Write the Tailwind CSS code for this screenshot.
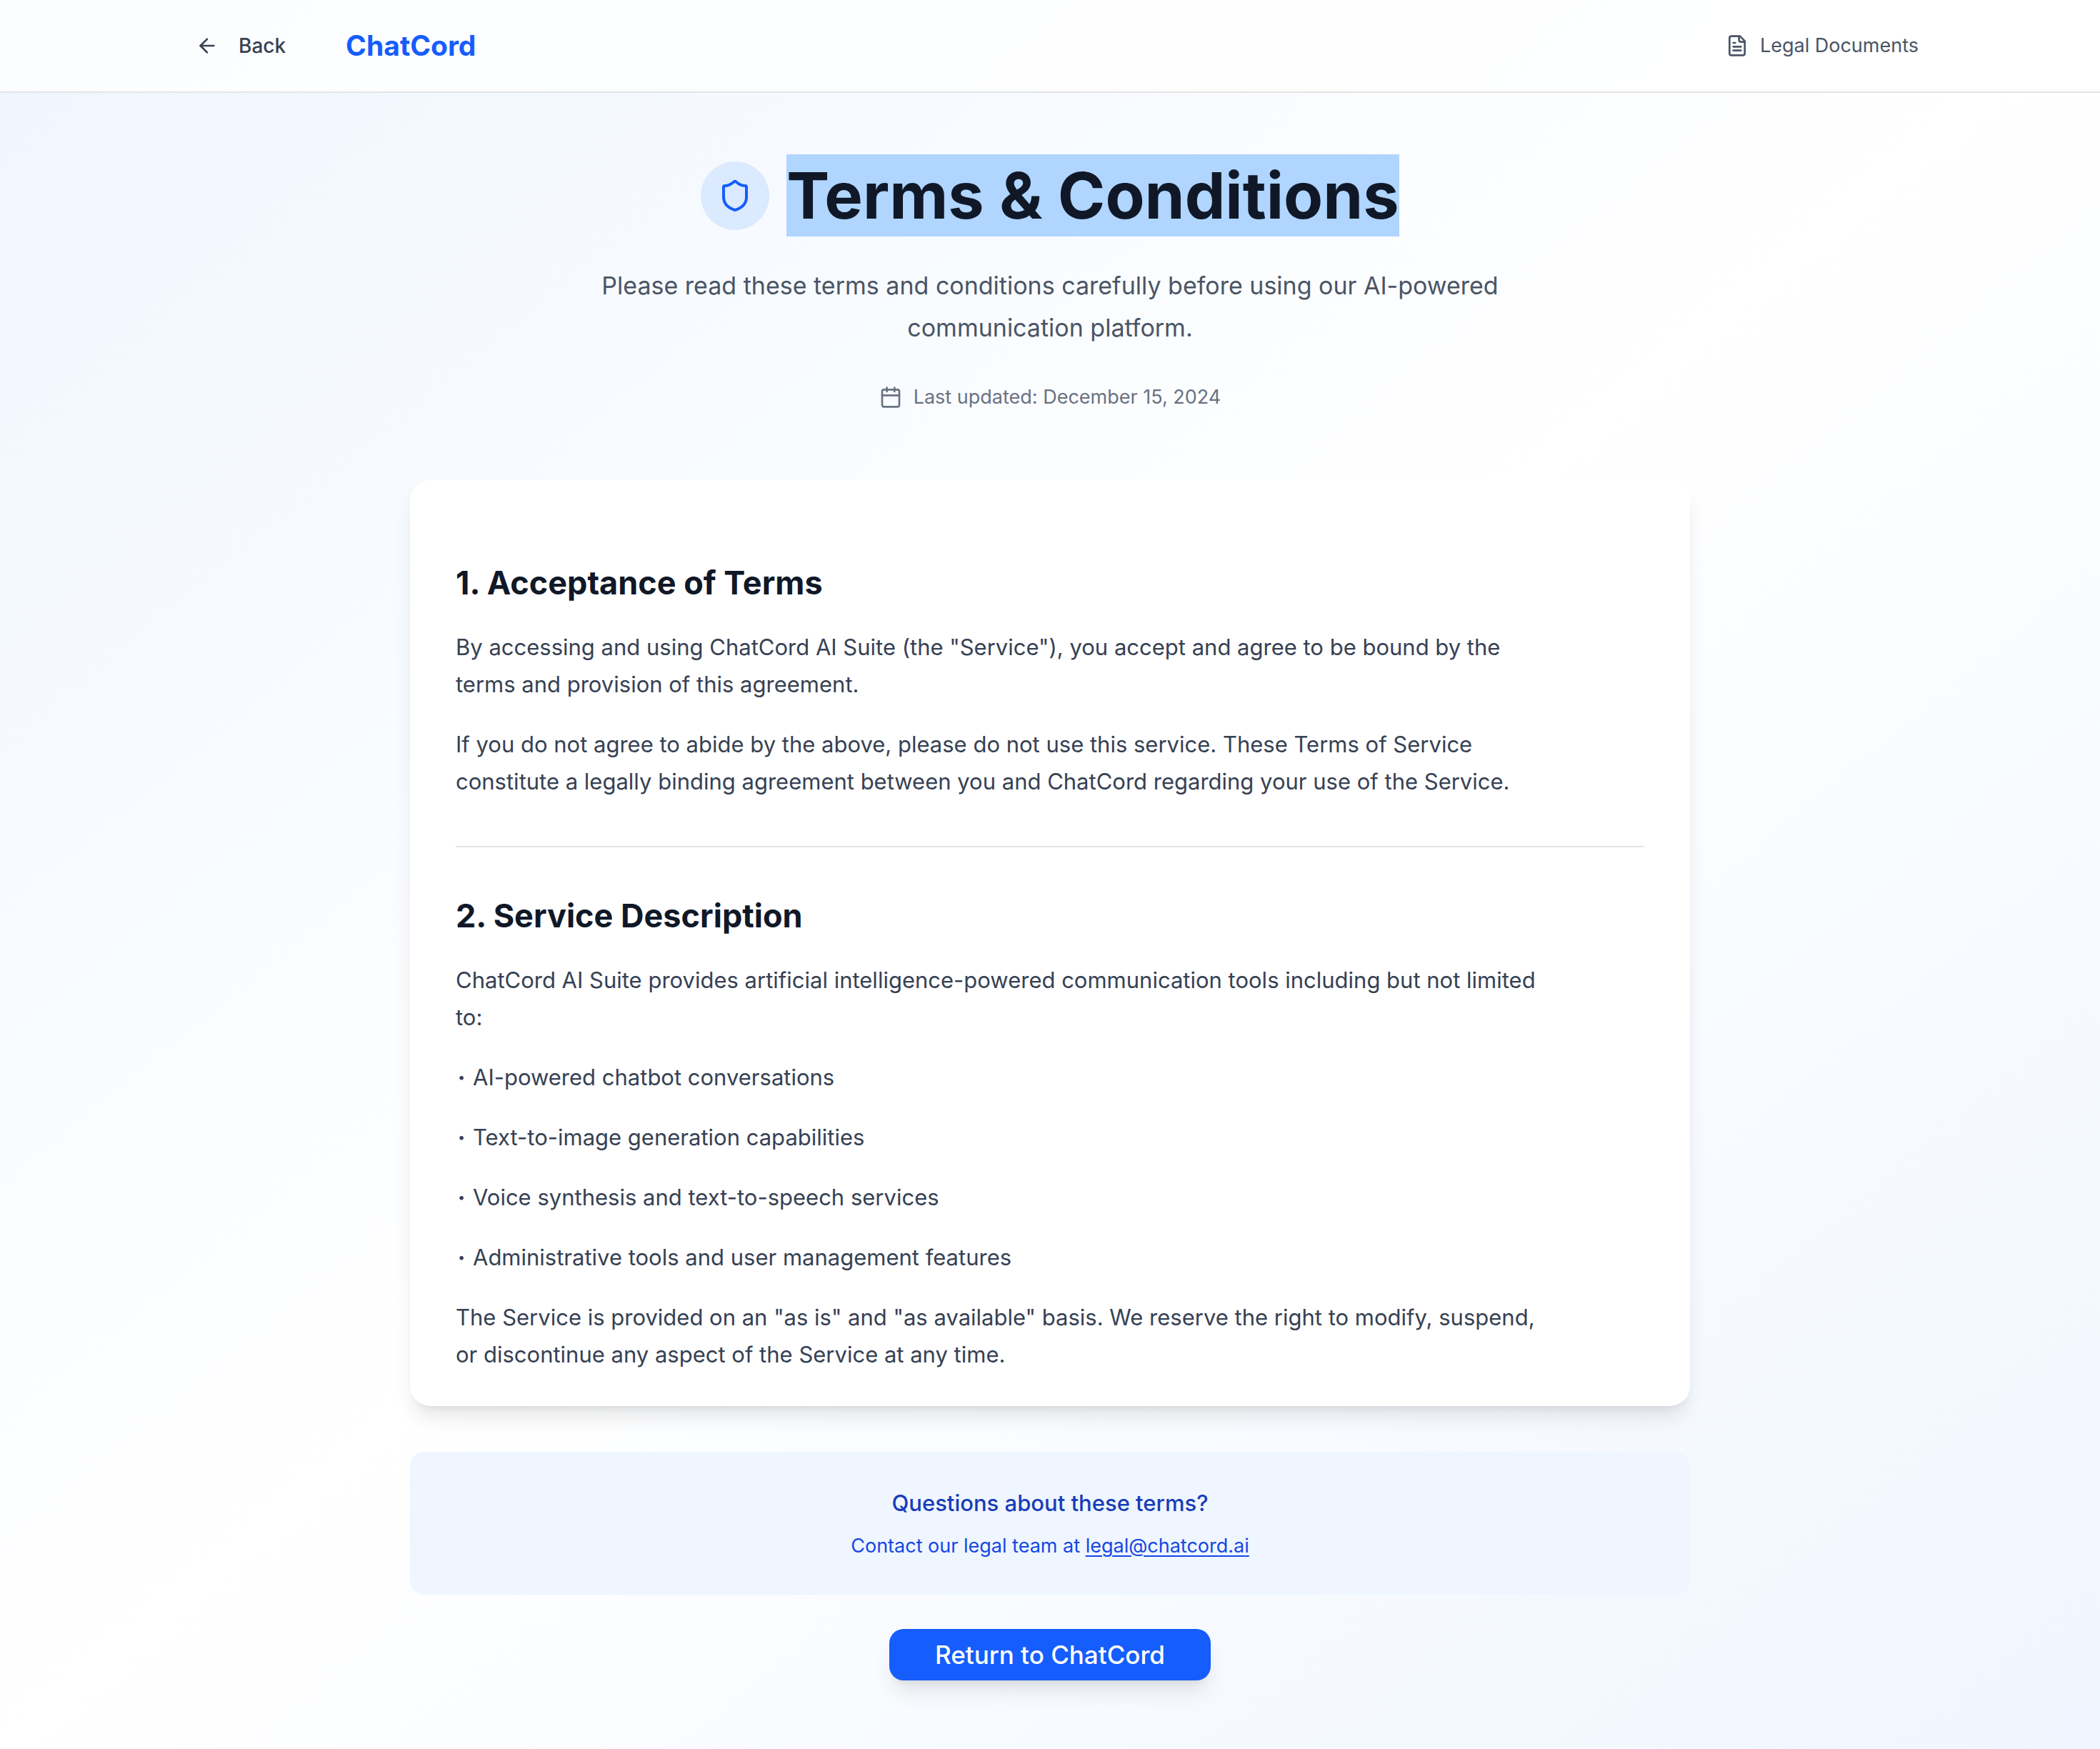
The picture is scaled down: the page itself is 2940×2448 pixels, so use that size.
<!DOCTYPE html>
<html lang="en">
<head>
<meta charset="utf-8">
<meta name="viewport" content="width=device-width, initial-scale=1">
<title>Terms &amp; Conditions - ChatCord</title>
<script src="https://cdn.jsdelivr.net/npm/@tailwindcss/browser@4"></script>
</head>
<body class="min-h-screen bg-linear-to-br from-[#eff6ff] via-white to-[#eff6ff] font-['Inter','Liberation_Sans',sans-serif] antialiased">
  <header class="border-b-2 border-[#e5e5e5] bg-white/80">
    <div class="mx-auto flex h-32 max-w-[2560px] items-center justify-between px-16">
      <div class="flex items-center gap-16">
        <button type="button" class="flex h-16 items-center gap-7 rounded-xl px-5 text-[28px] leading-10 font-medium text-[#364153]">
          <svg class="size-8" viewBox="0 0 24 24" fill="none" stroke="currentColor" stroke-width="2" stroke-linecap="round" stroke-linejoin="round" aria-hidden="true"><path d="m12 19-7-7 7-7"/><path d="M19 12H5"/></svg>
          Back
        </button>
        <a href="#" class="text-[39px] leading-14 font-bold text-[#155dfc]">ChatCord</a>
      </div>
      <a href="#" class="flex items-center gap-4 text-[27px] leading-10 text-[#4a5565]">
        <svg class="size-8" viewBox="0 0 24 24" fill="none" stroke="currentColor" stroke-width="2" stroke-linecap="round" stroke-linejoin="round" aria-hidden="true"><path d="M15 2H6a2 2 0 0 0-2 2v16a2 2 0 0 0 2 2h12a2 2 0 0 0 2-2V7Z"/><path d="M14 2v4a2 2 0 0 0 2 2h4"/><path d="M10 9H8"/><path d="M16 13H8"/><path d="M16 17H8"/></svg>
        Legal Documents
      </a>
    </div>
  </header>

  <main class="mx-auto max-w-[1920px] px-16 py-24">
    <div class="mb-24 flex flex-col items-center text-center">
      <div class="mb-12 flex items-center gap-6">
        <div class="rounded-full bg-[#dbeafe] p-6">
          <svg class="size-12 text-[#155dfc]" viewBox="0 0 24 24" fill="none" stroke="currentColor" stroke-width="2" stroke-linecap="round" stroke-linejoin="round" aria-hidden="true"><path d="M20 13c0 5-3.500 7.500-7.660 8.950a1 1 0 0 1-.67-.01C7.500 20.500 4 18 4 13V6a1 1 0 0 1 1-1c2 0 4.500-1.200 6.240-2.720a1.170 1.170 0 0 1 1.520 0C14.510 3.810 17 5 19 5a1 1 0 0 1 1 1z"/></svg>
        </div>
        <h1 class="text-[90px] leading-24 font-bold text-[#101828]"><span class="bg-[#b0d5ff] py-[3px]">Terms &amp; Conditions</span></h1>
      </div>
      <p class="mb-12 max-w-[1344px] text-[34px] leading-[59px] text-[#4a5565]">Please read these terms and conditions carefully before using our AI-powered communication platform.</p>
      <div class="flex items-center gap-4 text-[27px] leading-10 text-[#6a7282]">
        <svg class="size-8" viewBox="0 0 24 24" fill="none" stroke="currentColor" stroke-width="2" stroke-linecap="round" stroke-linejoin="round" aria-hidden="true"><path d="M8 2v4"/><path d="M16 2v4"/><rect width="18" height="18" x="3" y="4" rx="2"/><path d="M3 10h18"/></svg>
        <span>Last updated: December 15, 2024</span>
      </div>
    </div>

    <article class="rounded-[28px] bg-white px-16 pt-28 pb-[46px] shadow-[0_20px_30px_-6px_rgb(0_0_0/0.1),0_8px_12px_-8px_rgb(0_0_0/0.1)]">
      <section class="border-b-2 border-[#e5e5e5] pb-16">
        <h2 class="mb-8 text-[45px] leading-16 font-bold text-[#101828]">1. Acceptance of Terms</h2>
        <div class="flex max-w-[1536px] flex-col gap-8 text-[31px] leading-[52px] text-[#364153]">
          <p>By accessing and using ChatCord AI Suite (the "Service"), you accept and agree to be bound by the terms and provision of this agreement.</p>
          <p>If you do not agree to abide by the above, please do not use this service. These Terms of Service constitute a legally binding agreement between you and ChatCord regarding your use of the Service.</p>
        </div>
      </section>
      <section class="pt-16">
        <h2 class="mb-8 text-[45px] leading-16 font-bold text-[#101828]">2. Service Description</h2>
        <div class="flex max-w-[1536px] flex-col gap-8 text-[31px] leading-[52px] text-[#364153]">
          <p>ChatCord AI Suite provides artificial intelligence-powered communication tools including but not limited to:</p>
          <p class="flex"><span class="w-6 pr-2 text-center text-[18px]">•</span>AI-powered chatbot conversations</p>
          <p class="flex"><span class="w-6 pr-2 text-center text-[18px]">•</span>Text-to-image generation capabilities</p>
          <p class="flex"><span class="w-6 pr-2 text-center text-[18px]">•</span>Voice synthesis and text-to-speech services</p>
          <p class="flex"><span class="w-6 pr-2 text-center text-[18px]">•</span>Administrative tools and user management features</p>
          <p>The Service is provided on an "as is" and "as available" basis. We reserve the right to modify, suspend, or discontinue any aspect of the Service at any time.</p>
        </div>
      </section>
    </article>

    <aside class="mt-16 rounded-[20px] bg-[#eff6ff] p-12 text-center">
      <p class="mb-4 text-[31px] leading-12 font-medium text-[#193cb8]">Questions about these terms?</p>
      <p class="text-[27px] leading-10 text-[#1447e6]">Contact our legal team at <a href="mailto:legal@chatcord.ai" class="underline decoration-2 underline-offset-4">legal@chatcord.ai</a></p>
    </aside>

    <div class="mt-12 flex justify-center">
      <button type="button" class="h-18 rounded-[20px] bg-[#155dfc] px-16 text-[35px] leading-14 font-medium text-white shadow-[0_20px_30px_-6px_rgb(0_0_0/0.1),0_8px_12px_-8px_rgb(0_0_0/0.1)]">Return to ChatCord</button>
    </div>
  </main>
</body>
</html>
